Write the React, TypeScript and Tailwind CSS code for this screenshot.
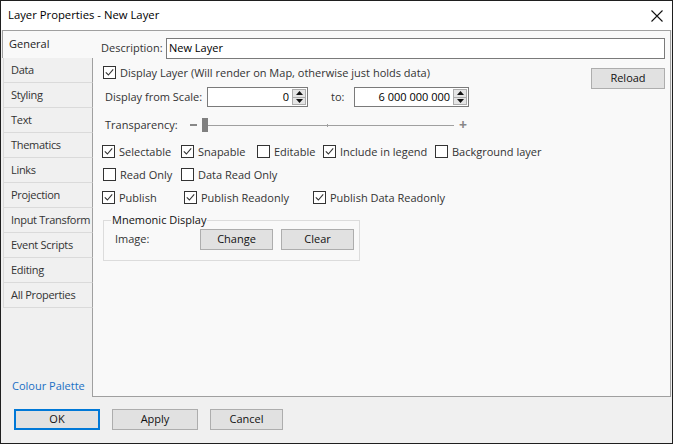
import React from "react";

const tabs = ["Data", "Styling", "Text", "Thematics", "Links", "Projection",
  "Input Transform", "Event Scripts", "Editing", "All Properties"];

const Check = ({ on }: { on?: boolean }) => (
  <span className="flex h-[13px] w-[13px] shrink-0 items-center justify-center border border-[#333] bg-white">
    {on && (
      <svg width="9" height="9" viewBox="0 0 9 9">
        <path d="M0.8 4.3 L3.4 7 L8.2 1.4" stroke="#333" strokeWidth="1.1" fill="none" />
      </svg>
    )}
  </span>
);

const Box = ({ label, on, w }: { label: string; on?: boolean; w?: string }) => (
  <label className={`flex items-center gap-[4px] ${w ?? ""}`}>
    <Check on={on} />
    <span className="leading-[13px] whitespace-nowrap">{label}</span>
  </label>
);

const Spin = () => (
  <span className="mr-[1px] flex h-[16px] w-[14px] flex-col border border-[#acacac] bg-[#e5e5e5]">
    <span className="flex flex-1 items-center justify-center border-b border-[#acacac]">
      <svg width="7" height="4" viewBox="0 0 7 4"><path d="M0 4 L3.5 0 L7 4 Z" fill="#111" /></svg>
    </span>
    <span className="flex flex-1 items-center justify-center">
      <svg width="7" height="4" viewBox="0 0 7 4"><path d="M0 0 L3.5 4 L7 0 Z" fill="#111" /></svg>
    </span>
  </span>
);

const Btn = ({ children, w, focus }: { children: React.ReactNode; w: string; focus?: boolean }) => (
  <button
    className={`flex h-[21px] items-center justify-center bg-[#e1e1e1] text-[#111] ${w} ${
      focus ? "border-2 border-[#0078d7]" : "border border-[#adadad]"}`}>
    {children}
  </button>
);

export default function App() {
  return (
    <div className="flex h-[444px] w-[673px] flex-col border border-[#1f1f1f] bg-[#f0f0f0] font-['Open_Sans',sans-serif] text-[11px] text-[#333]">
      {/* title bar */}
      <div className="flex h-[29px] shrink-0 items-center justify-between bg-white pl-[7px] pr-[9px]">
        <span className="text-[11.3px] text-black">Layer Properties - New Layer</span>
        <svg width="12" height="12" viewBox="0 0 12 12">
          <path d="M0.5 0.5 L11.5 11.5 M11.5 0.5 L0.5 11.5" stroke="#111" strokeWidth="1.1" />
        </svg>
      </div>

      {/* tabs + page */}
      <div className="flex min-h-0 flex-1 pr-[1px]">
        <div className="flex w-[92px] shrink-0 flex-col pl-[1px]">
          <div className="flex h-[28px] shrink-0 items-center border-l border-t border-[#a0a0a0] bg-[#f9f9f9] pl-[6px] text-[#222]">
            General
          </div>
          {tabs.map((t) => (
            <div key={t}
              className="ml-[1px] flex h-[25px] shrink-0 items-center border-b border-l border-r border-b-[#dadada] border-l-[#dadada] border-r-[#a0a0a0] pl-[7px] tracking-[-0.3px] whitespace-nowrap">
              {t}
            </div>
          ))}
          <div className="flex flex-1 items-end border-r border-[#a0a0a0] pb-[3px] pl-[10px]">
            <span className="text-[#1a6fc4]">Colour Palette</span>
          </div>
        </div>

        <div className="flex flex-1 flex-col border-b border-r border-t border-[#a0a0a0] bg-[#f9f9f9] pl-[8px] pr-[5px] pt-[7px]">
          <div className="flex h-[21px] items-center">
            <span className="w-[65px]">Description:</span>
            <div className="flex h-[21px] flex-1 items-center border border-[#7a7a7a] bg-white pl-[2px] text-black">
              New Layer
            </div>
          </div>

          <div className="mt-[7px] flex items-start justify-between">
            <div className="flex flex-col">
              <div className="ml-[2px]"><Box on label="Display Layer (Will render on Map, otherwise just holds data)" /></div>
              <div className="mt-[8px] flex h-[20px] items-center pl-[4px]">
                <span className="w-[102px]">Display from Scale:</span>
                <div className="flex h-[20px] w-[101px] items-center justify-end border border-[#7a7a7a] bg-white text-black">
                  <span className="mr-[3px]">0</span>
                  <Spin />
                </div>
                <span className="ml-[23px] w-[23px]">to:</span>
                <div className="flex h-[20px] w-[115px] items-center justify-end border border-[#7a7a7a] bg-white text-black">
                  <span className="mr-[3px]">6 000 000 000</span>
                  <Spin />
                </div>
              </div>
            </div>
            <div className="mt-[2px]">
              <Btn w="w-[74px]">Reload</Btn>
            </div>
          </div>

          <div className="mt-[11px] flex h-[14px] items-center pl-[4px]">
            <span className="w-[85px]">Transparency:</span>
            <span className="h-[2px] w-[7px] bg-[#888]" />
            <span className="ml-[5px] h-[14px] w-[6px] bg-[#808080]" />
            <span className="relative h-[1px] w-[246px] bg-[#a0a0a0]">
              <span className="absolute left-[119px] top-[-1px] h-[3px] w-[1px] bg-[#a0a0a0]" />
            </span>
            <span className="ml-[5px] text-[14px] leading-none font-bold text-[#888]">+</span>
          </div>

          <div className="mt-[13px] flex pl-[1px]">
            <Box on w="w-[79px]" label="Selectable" />
            <Box on w="w-[76px]" label="Snapable" />
            <Box w="w-[66px]" label="Editable" />
            <Box on w="w-[112px]" label="Include in legend" />
            <Box label="Background layer" />
          </div>
          <div className="mt-[10px] flex pl-[2px]">
            <Box w="w-[78px]" label="Read Only" />
            <Box label="Data Read Only" />
          </div>
          <div className="mt-[10px] flex pl-[1px]">
            <Box on w="w-[82px]" label="Publish" />
            <Box on w="w-[129px]" label="Publish Readonly" />
            <Box on label="Publish Data Readonly" />
          </div>

          <fieldset className="mt-[8px] ml-[2px] h-[49px] w-[257px] border border-[#dcdcdc] pl-[11px]">
            <legend className="ml-[-4px] px-[1px] text-[#111]">Mnemonic Display</legend>
            <div className="flex items-center">
              <span className="w-[85px]">Image:</span>
              <Btn w="w-[73px]">Change</Btn>
              <span className="w-[8px]" />
              <Btn w="w-[73px]">Clear</Btn>
            </div>
          </fieldset>
        </div>
      </div>

      {/* buttons */}
      <div className="flex h-[46px] shrink-0 gap-[12px] pl-[13px] pt-[12px]">
        <Btn focus w="w-[86px]">OK</Btn>
        <Btn w="w-[86px]">Apply</Btn>
        <Btn w="w-[73px]">Cancel</Btn>
      </div>
    </div>
  );
}
